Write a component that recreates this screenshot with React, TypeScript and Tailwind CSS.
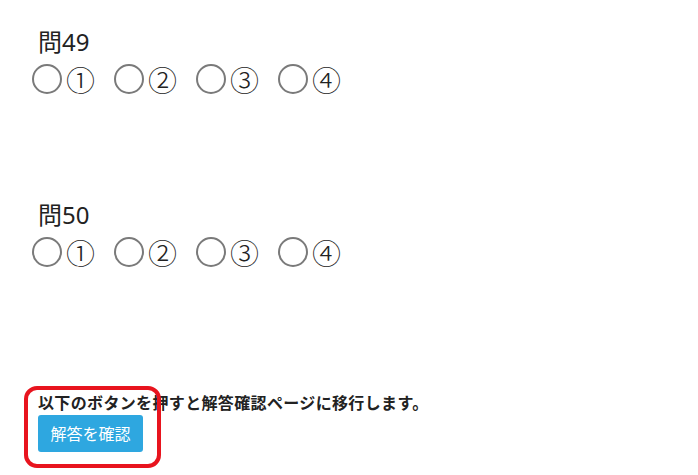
import React from "react";

const nums = ["①", "②", "③", "④"];

function Question({ n }: { n: number }) {
  return (
    <div className="flex flex-col">
      <div className="pl-[6px] h-[34px] text-[24px] leading-[34px] text-[#222]">
        <span style={{ fontFamily: '"Noto Sans CJK JP", sans-serif' }}>問</span>
        <span style={{ fontFamily: '"Noto Sans", sans-serif' }}>{n}</span>
      </div>
      <div className="flex mt-[6px] h-[30px] items-center">
        {nums.map((c, i) => (
          <div key={i} className="flex items-center w-[82px]">
            <div className="w-[30px] h-[30px] rounded-full border-2 border-[#7a7a7a] bg-white" />
            <span
              className="ml-[4px] text-[29px] leading-[30px] font-light text-[#222]"
              style={{ fontFamily: '"Noto Sans CJK JP", sans-serif' }}
            >
              {c}
            </span>
          </div>
        ))}
      </div>
    </div>
  );
}

export default function App() {
  return (
    <div
      className="relative w-[698px] h-[475px] bg-white overflow-hidden pl-[32px] pt-[24px]"
      style={{ fontFamily: '"Noto Sans CJK JP", sans-serif' }}
    >
      <Question n={49} />
      <div className="h-[103px]" />
      <Question n={50} />
      <div className="h-[125px]" />
      <div className="pl-[6px]">
        <div className="text-[16px] leading-[20px] font-bold tracking-[0.35px] text-[#222]">以下のボタンを押すと解答確認ページに移行します。</div>
        <button className="mt-[3px] w-[105px] h-[37px] rounded-[3px] bg-[#2ea7e0] text-white text-[16px] leading-[37px]">
          解答を確認
        </button>
      </div>
      <div className="absolute left-[24px] top-[386px] w-[137px] h-[82px] rounded-[13px] border-[4px] border-[#e8141e] pointer-events-none" />
    </div>
  );
}
